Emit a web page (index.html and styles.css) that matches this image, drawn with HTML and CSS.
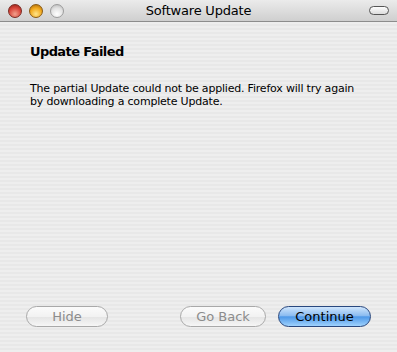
FILE: index.html
```html
<!DOCTYPE html>
<html lang="en">
<head>
  <meta charset="UTF-8">
  <title>Software Update</title>
  <link rel="stylesheet" href="styles.css">
</head>
<body>
  <div class="window">
    <div class="titlebar">
      <div class="lights">
        <span class="light red"></span>
        <span class="light yellow"></span>
        <span class="light gray"></span>
      </div>
      <p class="title">Software Update</p>
      <span class="toolbarButton"></span>
    </div>
    <div class="content">
      <p class="heading">Update Failed</p>
      <p class="message">The partial Update could not be applied. Firefox will try again by downloading a complete Update.</p>
      <div class="buttons">
        <button class="button disabled hide">Hide</button>
        <div class="rightButtons">
          <button class="button disabled back">Go Back</button>
          <button class="button default next">Continue</button>
        </div>
      </div>
    </div>
  </div>
</body>
</html>
```

FILE: styles.css
```css
body, html {
  height: 100%;
  margin: 0;
  background-color: #ececec;
}
.window {
  height: 352px;
  display: flex;
  flex-direction: column;
  font-family: "DejaVu Sans", Verdana, sans-serif;
}
.titlebar {
  height: 21px;
  border-bottom: 1px solid #8d8d8d;
  background: linear-gradient(#ebebeb, #cfcfcf);
  display: flex;
  align-items: center;
  position: relative;
}
.lights {
  display: flex;
  gap: 7px;
  padding-left: 8px;
}
.light {
  width: 14px;
  height: 14px;
  border-radius: 50%;
  box-sizing: border-box;
  border: 1px solid #6b6b6b;
}
.red {
  background: radial-gradient(circle at 50% 75%, #f2a08c 0%, #d9473c 55%, #8e1d14 100%);
  border-color: #7a2a22;
}
.yellow {
  background: radial-gradient(circle at 50% 75%, #ffe58a 0%, #f1a81c 55%, #a0620a 100%);
  border-color: #8a5a12;
}
.gray {
  background: radial-gradient(circle at 50% 75%, #ffffff 0%, #e2e2e2 55%, #b3b3b3 100%);
  border-color: #9c9c9c;
}
.title {
  position: absolute;
  left: 0;
  right: 0;
  top: 0;
  margin: 0;
  line-height: 21px;
  text-align: center;
  font-size: 13px;
  letter-spacing: -0.2px;
  color: #000;
  pointer-events: none;
}
.toolbarButton {
  margin-left: auto;
  margin-right: 8px;
  width: 18px;
  height: 7px;
  border: 1px solid #555;
  border-radius: 5px;
  background: linear-gradient(#fdfdfd, #dcdcdc);
}
.content {
  flex: 1;
  display: flex;
  flex-direction: column;
  padding: 0 26px 25px 30px;
  background: repeating-linear-gradient(#eeeeee 0px, #eeeeee 2px, #e8e8e8 2px, #e8e8e8 4px);
}
.heading {
  margin: 22px 0 0 0;
  font-size: 13px;
  font-weight: bold;
  letter-spacing: -0.6px;
  color: #000;
}
.message {
  margin: 23px 0 0 0;
  font-size: 11px;
  line-height: 13px;
  letter-spacing: -0.2px;
  color: #000;
  width: 340px;
}
.buttons {
  margin-top: auto;
  margin-left: -4px;
  display: flex;
  justify-content: space-between;
}
.rightButtons {
  display: flex;
  gap: 12px;
}
.button {
  height: 21px;
  border-radius: 11px;
  font-family: "DejaVu Sans", Verdana, sans-serif;
  font-size: 13px;
  padding: 0;
  box-sizing: border-box;
}
.disabled {
  border: 1px solid #a9a9a9;
  background: linear-gradient(#fbfbfb 0%, #f2f2f2 50%, #e4e4e4 51%, #f6f6f6 100%);
  color: #8c8c8c;
}
.default {
  border: 1px solid #28477e;
  background: linear-gradient(#cfe5fc 0%, #8cbcf0 45%, #4e98e8 52%, #9fd2fd 100%);
  color: #000;
}
.hide {
  width: 82px;
}
.back {
  width: 86px;
}
.next {
  width: 93px;
}
```
